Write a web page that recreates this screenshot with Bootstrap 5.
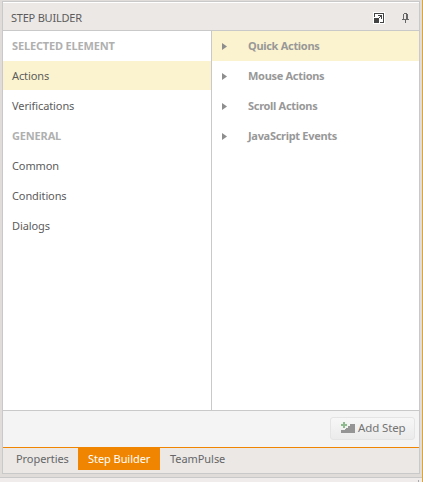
<!DOCTYPE html>
<html lang="en">
<head>
<meta charset="utf-8">
<meta name="viewport" content="width=device-width, initial-scale=1">
<title>Step Builder</title>
<link href="https://cdn.jsdelivr.net/npm/bootstrap@5.3.0/dist/css/bootstrap.min.css" rel="stylesheet">
<style>
body{height:482px;background:#e0dcda;font-family:"Noto Sans","Open Sans",sans-serif;font-size:11px;line-height:16px;color:#5c5c5c;border-right:1px solid #daa641}
.dock{height:473px;margin:1px 2px 0 2px;border:1px solid #c9c9c9;background:#ebe8e6}
.dock-head{height:29px;border-top:1px solid #fff;border-bottom:1px solid #c9c9c9;padding:2px 10px 0 8px;letter-spacing:-.22px}
.dock-head .expand{margin-right:17px}
.dock-body{height:380px;background:#fff;border-bottom:1px solid #c9c9c9}
.pane-left{width:209px;border-right:1px solid #c9c9c9;letter-spacing:-.1px}
.entry{height:30px;padding-left:9px}
.picked{background:#fbf3cf}
.pane-left .picked{height:29px;margin-bottom:1px}
.group{color:#b0b0b0;font-weight:700;letter-spacing:-.16px}
.action{color:#989898;font-weight:700;padding-left:10px;letter-spacing:-.3px}
.action svg{margin-right:21px}
.dock-foot{height:37px;background:#f4f4f4;border-bottom:1px solid #ef8500;padding:0 4px 1px}
.btn-step{height:23px;width:85px;padding:0 0 1px 10px;font-size:11.5px;line-height:16px;letter-spacing:-.12px;color:#747474;border:1px solid #e4e4e4;border-radius:3px;background:linear-gradient(#f7f7f7,#ebebeb)}
.btn-step svg{margin-right:3px}
.tabs{height:22px;letter-spacing:-.06px}
.tab{height:22px;color:#666}
.tab-on{background:#ef8500;color:#fff}
.t1{width:75px;padding-left:13px}.t2{width:82px;padding-left:10px}.t3{padding-left:10px}
.below{height:5px;margin-top:3px;border-top:1px solid #c9c9c9;background:#f0eceb}
.below i{width:1px;height:2px;background:#aaa;margin-right:3px}
</style>
<script src="https://cdn.jsdelivr.net/npm/bootstrap@5.3.0/dist/js/bootstrap.bundle.min.js"></script>
</head>
<body class="overflow-hidden">
<main class="dock">
  <header class="dock-head d-flex align-items-center">
    <span class="text-nowrap me-auto">STEP BUILDER</span>
    <svg class="expand" width="12" height="12" shape-rendering="crispEdges"><path fill="#fff" d="M0 0h12v12H0z"/><path fill="#444" d="M1 1h10v10H7v-1h3V2H2v3H1zM1 6h5v5H1zM5 3h4v4H8V5H7v1H6V5h1V4H5z"/></svg>
    <svg width="7" height="10" shape-rendering="crispEdges"><path fill="#666" d="M2 0h3v1H2zM1 1h1v5H1zM4 1h2v5H4zM0 6h7v1H0zM3 7h1v3H3z"/></svg>
  </header>
  <div class="dock-body d-flex">
    <nav class="pane-left">
      <div class="entry group d-flex align-items-center text-nowrap">SELECTED ELEMENT</div>
      <div class="entry picked d-flex align-items-center">Actions</div>
      <div class="entry d-flex align-items-center">Verifications</div>
      <div class="entry group d-flex align-items-center">GENERAL</div>
      <div class="entry d-flex align-items-center">Common</div>
      <div class="entry d-flex align-items-center">Conditions</div>
      <div class="entry d-flex align-items-center">Dialogs</div>
    </nav>
    <section class="flex-fill">
      <div class="entry action picked d-flex align-items-center"><svg width="5" height="7"><path fill="#8e8e8e" d="M0 0l5 3.5L0 7z"/></svg>Quick Actions</div>
      <div class="entry action d-flex align-items-center"><svg width="5" height="7"><path fill="#8e8e8e" d="M0 0l5 3.5L0 7z"/></svg>Mouse Actions</div>
      <div class="entry action d-flex align-items-center"><svg width="5" height="7"><path fill="#8e8e8e" d="M0 0l5 3.5L0 7z"/></svg>Scroll Actions</div>
      <div class="entry action d-flex align-items-center"><svg width="5" height="7"><path fill="#8e8e8e" d="M0 0l5 3.5L0 7z"/></svg>JavaScript Events</div>
    </section>
  </div>
  <div class="dock-foot d-flex align-items-center justify-content-end">
    <button type="button" class="btn btn-step d-flex align-items-center text-nowrap"><svg class="flex-shrink-0" width="14" height="12" shape-rendering="crispEdges"><path fill="#959595" d="M9 2h5v9H0V8h4V6h3V4h2z"/><path fill="#f2f2f2" d="M1 0h4v1h2v4H5v2H1V5H0V1h1z"/><path fill="#8fba8f" d="M2 0h2v2h2v2H4v2H2V4H0V2h2z"/></svg>Add Step</button>
  </div>
  <nav class="tabs d-flex">
    <div class="tab t1 d-flex align-items-center">Properties</div>
    <div class="tab tab-on t2 d-flex align-items-center text-nowrap">Step Builder</div>
    <div class="tab t3 d-flex align-items-center">TeamPulse</div>
  </nav>
</main>
<div class="below d-flex justify-content-end align-items-end"><i></i></div>
</body>
</html>
